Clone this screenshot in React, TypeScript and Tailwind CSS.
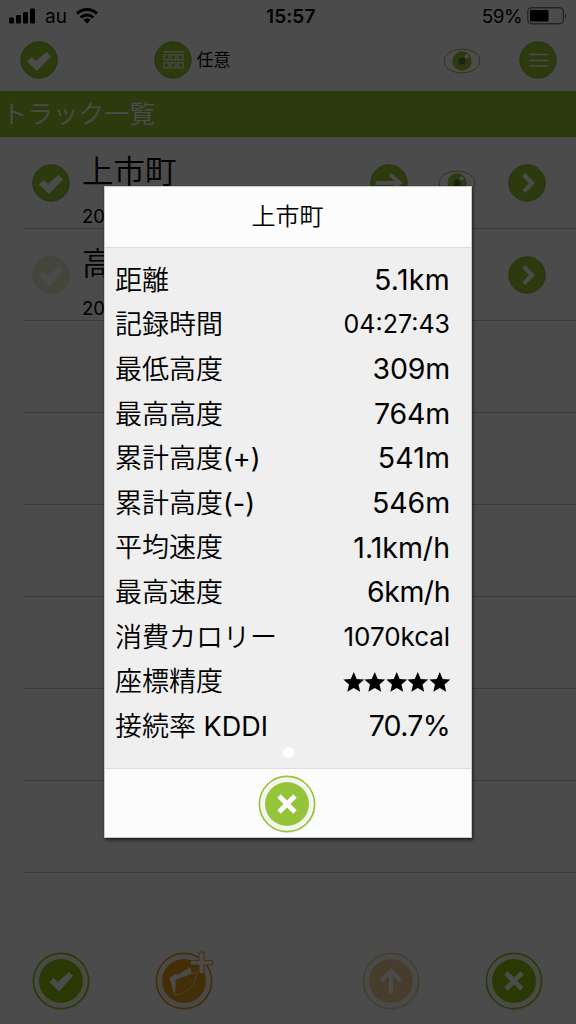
import type { ReactNode } from 'react'
import clsx from 'clsx'

const stats = [
  { label: '距離', value: '5.1km', size: 'text-[28.5px] tracking-[0.3px]' },
  { label: '記録時間', value: '04:27:43', size: 'text-[25px] tracking-[0px]' },
  { label: '最低高度', value: '309m', size: 'text-[28.5px] tracking-[-0.2px]' },
  { label: '最高高度', value: '764m', size: 'text-[28.5px] tracking-[-0.2px]' },
  { label: '累計高度', suffix: '(+)', value: '541m', size: 'text-[28.5px] tracking-[0.1px]' },
  { label: '累計高度', suffix: '(-)', value: '546m', size: 'text-[28.5px] tracking-[-0.1px]' },
  { label: '平均速度', value: '1.1km/h', size: 'text-[28.5px] tracking-[0px]' },
  { label: '最高速度', value: '6km/h', size: 'text-[28.5px] tracking-[-0.5px]' },
  { label: '消費カロリー', value: '1070kcal', size: 'text-[26px] tracking-[-0.05px]' },
  { label: '座標精度', stars: 5 },
  { label: '接続率', suffix: ' KDDI', value: '70.7%', size: 'text-[28.5px] tracking-[-0.7px]' },
]

const tracks = [
  { name: '上市町', date: '2018', checked: true },
  { name: '高', date: '2018', checked: false },
]

const CHECK = 'M-12 1.5 L-7.5 -3 L-3 1 L7.5 -8 L12 -3.5 L-2 11 Z'

function RoundIcon({ children, faded }: { children: ReactNode; faded?: boolean }) {
  return (
    <svg
      viewBox="-19 -19 38 38"
      className={clsx('w-[38px] h-[38px] shrink-0', faded && 'opacity-25')}
    >
      <circle r="18.2" fill="#95c130" stroke="#6f9b2a" strokeWidth="0.8" />
      {children}
    </svg>
  )
}

function RingIcon({ color, children, faded }: { color: string; children: ReactNode; faded?: boolean }) {
  return (
    <svg
      viewBox="-29 -29 58 58"
      className={clsx('w-[58px] h-[58px] shrink-0 overflow-visible', faded && 'opacity-45')}
    >
      <circle cx="1" cy="1.5" r="28" fill="#000000" opacity="0.05" />
      <circle r="27.6" fill="#fbfbfb" stroke={color} strokeWidth="1.7" />
      <circle r="24" fill="none" stroke="#f3f5ec" strokeWidth="3" />
      <circle r="22" fill={color} />
      {children}
    </svg>
  )
}

function CrossMark() {
  return <path d="M-8 -8 L8 8 M8 -8 L-8 8" stroke="#fbfbfb" strokeWidth="4.8" />
}

function ChevronMark() {
  return <path d="M-3.2 -8.5 L5 0 L-3.2 8.5" fill="none" stroke="#fafafa" strokeWidth="4.2" />
}

function Eye() {
  return (
    <svg viewBox="-19 -13 38 26" className="w-[38px] h-[26px] shrink-0">
      <ellipse rx="18" ry="12" fill="#fdfdfd" stroke="#a4b05c" strokeWidth="1" />
      <circle r="9.7" fill="#95c130" />
      <circle r="3.5" fill="#4d7a3c" />
      <circle cx="4.6" cy="-4.4" r="2" fill="#ffffff" />
    </svg>
  )
}

function StatusBar() {
  return (
    <div className="flex items-center h-8 pl-[9px] pr-[8px] text-black">
      <svg viewBox="0 0 26 16" className="w-[26px] h-4">
        <rect x="0" y="9.5" width="5" height="6" rx="1.3" />
        <rect x="7" y="7" width="5" height="8.5" rx="1.3" />
        <rect x="14" y="4" width="5" height="11.5" rx="1.3" />
        <rect x="21" y="0.5" width="5" height="15" rx="1.3" />
      </svg>
      <span className="ml-[10px] w-[21px] text-[19px] leading-none font-[370]">au</span>
      <svg viewBox="0 0 22 16" className="ml-[10px] w-[22px] h-4">
        <g fill="none" stroke="#000000" strokeWidth="2.9">
          <path d="M1.1 5.6 A14 14 0 0 1 20.9 5.6" />
          <path d="M4.7 9.5 A9 9 0 0 1 17.3 9.5" />
        </g>
        <path d="M7.3 11.8 A5.2 5.2 0 0 1 14.7 11.8 L11 15.5 Z" />
      </svg>
      <span className="ml-[168px] w-[51px] text-[19px] font-semibold leading-none tracking-[0.1px]">15:57</span>
      <span className="ml-auto text-[19px] leading-none tracking-[-0.6px] font-[370]">59%</span>
      <svg viewBox="0 0 41 18" className="ml-[5px] w-[41px] h-[18px]">
        <rect x="0.8" y="0.8" width="35.5" height="16" rx="3.8" fill="none" stroke="#7d7d7d" strokeWidth="1.4" />
        <rect x="3" y="3" width="18.5" height="11.5" rx="1" />
        <path d="M38 6 Q40.5 9 38 12 Z" fill="#7d7d7d" />
      </svg>
    </div>
  )
}

function Toolbar() {
  return (
    <div className="flex items-center h-[59px] pl-[19.5px] pr-[19px] pb-[3px]">
      <RoundIcon>
        <path d={CHECK} fill="#fafafa" />
      </RoundIcon>
      <div className="ml-[96px] flex items-center gap-[5px]">
        <RoundIcon>
          <path d="M-9.5 -8.2 H10.5" stroke="#fafafa" strokeWidth="1.3" />
          <g fill="none" stroke="#fafafa" strokeWidth="1.2">
            {[-9, -2, 5].map((x) => (
              <g key={x}>
                <rect x={x} y="-5.2" width="5" height="5" />
                <rect x={x} y="2.8" width="5" height="5" />
              </g>
            ))}
          </g>
        </RoundIcon>
        <span className="text-[17px] leading-none text-black pt-px">任意</span>
      </div>
      <div className="ml-auto flex items-center gap-[38px]">
        <div className="pt-[2px]">
          <Eye />
        </div>
        <RoundIcon>
          <path d="M-9 -5.5 H10 M-9 0.5 H10 M-9 6 H10" stroke="#fafafa" strokeWidth="1.6" />
        </RoundIcon>
      </div>
    </div>
  )
}

function TrackRow({ name, date, checked }: { name: string; date: string; checked: boolean }) {
  return (
    <div className="ml-[23px] h-[92px] shrink-0 flex items-center border-b border-[#c4c4c4] pl-[9px] pr-[30px]">
      <RoundIcon faded={!checked}>
        <path d={CHECK} fill="#fafafa" />
      </RoundIcon>
      <div className="ml-[12px] w-[220px] h-full flex flex-col pt-[15px]">
        <span className="font-[350] text-[31.5px] leading-[40px] text-black">{name}</span>
        <span className="mt-[12px] text-[18.5px] leading-[24px] text-black font-[370]">{date}</span>
      </div>
      {checked && (
        <div className="ml-[68px] flex items-center gap-[30px]">
          <RoundIcon>
            <path d="M-13.5 0 H10 M1 -8.5 L11 0 L1 8.5" fill="none" stroke="#fafafa" strokeWidth="3.8" />
          </RoundIcon>
          <Eye />
        </div>
      )}
      <div className="ml-auto">
        <RoundIcon>
          <ChevronMark />
        </RoundIcon>
      </div>
    </div>
  )
}

function BottomBar() {
  return (
    <div className="mt-auto flex items-center h-[86px] pl-[31.5px] pr-[33px]">
      <RingIcon color="#8cc010">
        <path d="M-11.5 1 L-7.5 -3 L-3 1 L8 -9 L12 -5 L-2 10.5 Z" fill="#fbfbfb" />
      </RingIcon>
      <div className="ml-[65px]">
        <RingIcon color="#e09a18">
          <path d="M-14.5 -3 L-8.5 -7 L-6.5 -6 L6 -13.5 L8 -8 L-8.5 -1.5 L-9.5 14 Z" fill="#fbfbfb" />
          <path d="M-9.5 14.5 L-8 -1.5 L14 -9.5 L9.5 4 L0 12 Z" fill="#e09a18" stroke="#fbfbfb" strokeWidth="0.6" />
          <path
            d="M15 -29 H20 V-20.5 H28.5 V-16 H20 V-7.5 H15 V-16 H6.5 V-20.5 H15 Z"
            fill="#fbfbfb"
            stroke="#e09a18"
            strokeWidth="0.9"
          />
        </RingIcon>
      </div>
      <div className="ml-auto flex gap-[65px]">
        <RingIcon color="#e09a18" faded>
          <path d="M0 12.5 V-9 M-9.5 -0.5 L0 -10 L9.5 -0.5" fill="none" stroke="#fbfbfb" strokeWidth="4.2" />
        </RingIcon>
        <RingIcon color="#8cc010">
          <CrossMark />
        </RingIcon>
      </div>
    </div>
  )
}

function Stars({ count }: { count: number }) {
  return (
    <div className="flex pt-px">
      {Array.from({ length: count }, (_, i) => (
        <svg key={i} viewBox="0 0 24 24" className="w-[21.5px] h-[22px]">
          <path d="M12 0.8 L15.3 8.6 L23.6 9.3 L17.3 14.8 L19.2 23 L12 18.7 L4.8 23 L6.7 14.8 L0.4 9.3 L8.7 8.6 Z" />
        </svg>
      ))}
    </div>
  )
}

function TrackDialog() {
  return (
    <div className="flex flex-col w-[368px] h-[652px] bg-[#efefef] border border-[#c9c9c9] shadow-[1px_2px_3px_rgba(0,0,0,0.6)] text-black">
      <div className="h-[61px] shrink-0 flex items-center justify-center bg-[#fcfcfc] border-b border-[#dddddd] pr-px pb-px">
        <h2 className="font-[350] text-[24px] leading-none">上市町</h2>
      </div>

      <div className="grow pt-[10px] pl-[10px] pr-[21px]">
        {stats.map((s) => (
          <div key={s.label + (s.suffix ?? '')} className="flex items-center justify-between h-[44.6px]">
            <span className="whitespace-pre text-[27px] leading-none">
              <span className="font-[350]">{s.label}</span>
              <span className="font-[370]">{s.suffix}</span>
            </span>
            {s.stars ? (
              <Stars count={s.stars} />
            ) : (
              <span className={clsx('leading-none font-[370]', s.size)}>{s.value}</span>
            )}
          </div>
        ))}
        {/* page indicator */}
        <div className="flex justify-center pl-[11px]">
          <span className="w-[11px] h-[11px] rounded-full bg-white -mt-[2px]" />
        </div>
      </div>

      <div className="h-[69px] shrink-0 flex items-center justify-center bg-[#fcfcfc] border-t border-[#dddddd] pt-[2px] pr-[3px]">
        <button>
          <RingIcon color="#95c43a">
            <CrossMark />
          </RingIcon>
        </button>
      </div>
    </div>
  )
}

export default function App() {
  return (
    <div className="relative w-[576px] h-[1024px] overflow-hidden bg-[#fafafa] font-['Inter','Noto_Sans_CJK_JP',sans-serif]">
      <div className="flex flex-col h-full">
        <StatusBar />
        <Toolbar />
        <div className="h-[46px] shrink-0 flex items-center bg-[#95c130] pl-[2px]">
          <h1 className="font-[350] text-[25.5px] leading-none text-[#fafafa]">トラック一覧</h1>
        </div>
        {tracks.map((t) => (
          <TrackRow key={t.name} {...t} />
        ))}
        {[0, 1, 2, 3, 4, 5].map((i) => (
          <div key={i} className="ml-[23px] h-[92px] shrink-0 border-b border-[#c4c4c4]" />
        ))}
        <BottomBar />
      </div>

      {/* dimmed backdrop with the dialog */}
      <div className="absolute inset-0 flex items-center justify-center bg-black/70">
        <TrackDialog />
      </div>
    </div>
  )
}
